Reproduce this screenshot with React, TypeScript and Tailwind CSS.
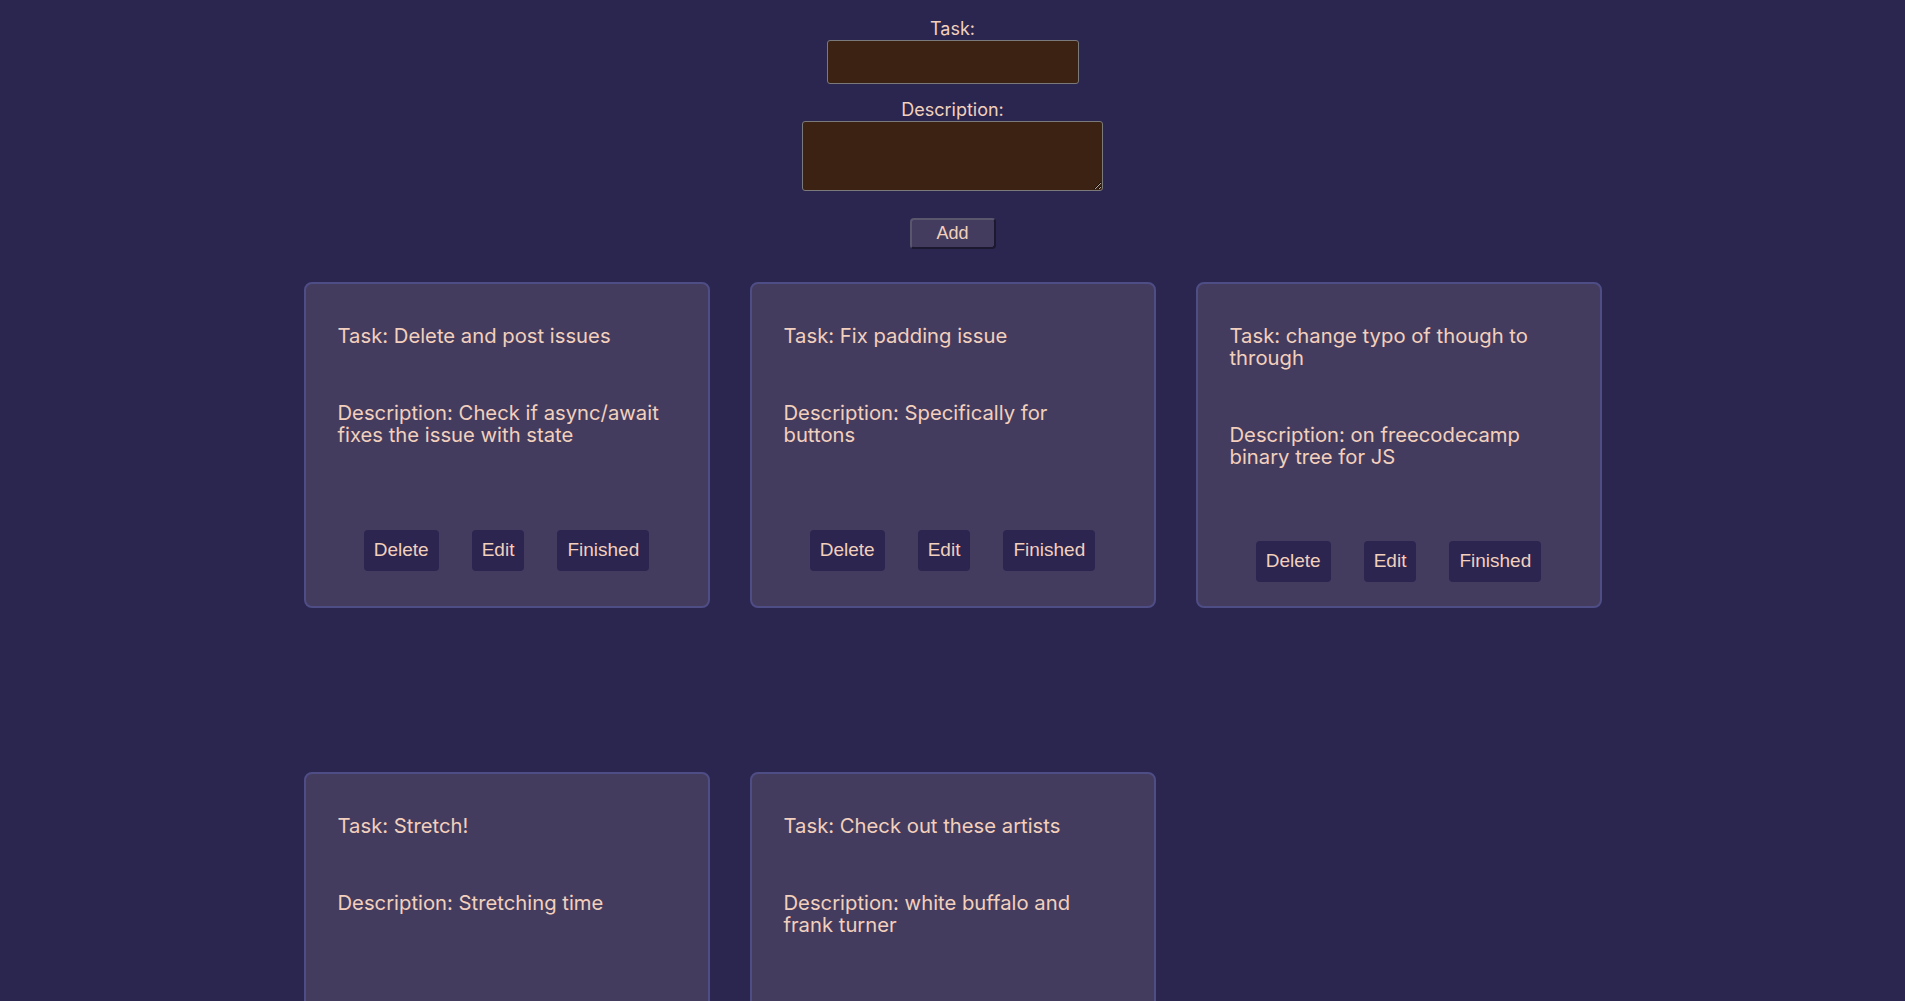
import React from "react";

const tasks = [
  { task: "Delete and post issues", desc: "Check if async/await fixes the issue with state" },
  { task: "Fix padding issue", desc: "Specifically for buttons" },
  { task: "change typo of though to through", desc: "on freecodecamp binary tree for JS" },
  { task: "Stretch!", desc: "Stretching time" },
  { task: "Check out these artists", desc: "white buffalo and frank turner" },
];

function Card({ task, desc }: { task: string; desc: string }) {
  return (
    <div className="h-[326px] bg-[#443c5e] border-2 border-[#4f4d86] rounded-[8px] px-[32px] pt-[41px] pb-[6px] flex flex-col">
      <p className="pr-[8px] text-[20.25px] leading-[22px]">Task: {task}</p>
      <p className="pr-[8px] mt-[55px] text-[20.25px] leading-[22px]">Description: {desc}</p>
      <div className="mt-[54px] flex-1 flex items-center justify-center gap-[33px]">
        {["Delete", "Edit", "Finished"].map((b) => (
          <button
            key={b}
            className="h-[41px] px-[10px] bg-[#2b2550] rounded-[4px] text-[19px] font-['Liberation_Sans',Arial,sans-serif] text-[#f2d0bd]"
          >
            {b}
          </button>
        ))}
      </div>
    </div>
  );
}

export default function App() {
  return (
    <div className="min-h-screen bg-[#2b2650] text-[#f2d0bd] font-['Inter',sans-serif] pb-[80px]">
      <div className="flex flex-col items-center pt-[17px]">
        <label className="text-[18px] leading-[23px]">Task:</label>
        <input className="w-[252px] h-[44px] bg-[#3c2212] border border-[#7a7a7a] rounded-[3px] outline-none" />
        <label className="mt-[14px] text-[18px] leading-[23px]">Description:</label>
        <textarea className="w-[301px] h-[70px] bg-[#3c2212] border border-[#7a7a7a] rounded-[3px] outline-none resize" />
        <button className="mt-[27px] w-[86px] h-[31px] bg-[#443c5e] border-2 border-[#5a566e] border-b-[#1b1830] border-r-[#1b1830] rounded-[4px] text-[18px] font-['Liberation_Sans',Arial,sans-serif] text-[#f2d0bd]">
          Add
        </button>
      </div>
      <div className="mt-[33px] grid grid-cols-[repeat(3,406px)] justify-center gap-x-[40px] gap-y-[164px]">
        {tasks.map((t) => (
          <Card key={t.task} task={t.task} desc={t.desc} />
        ))}
      </div>
    </div>
  );
}
